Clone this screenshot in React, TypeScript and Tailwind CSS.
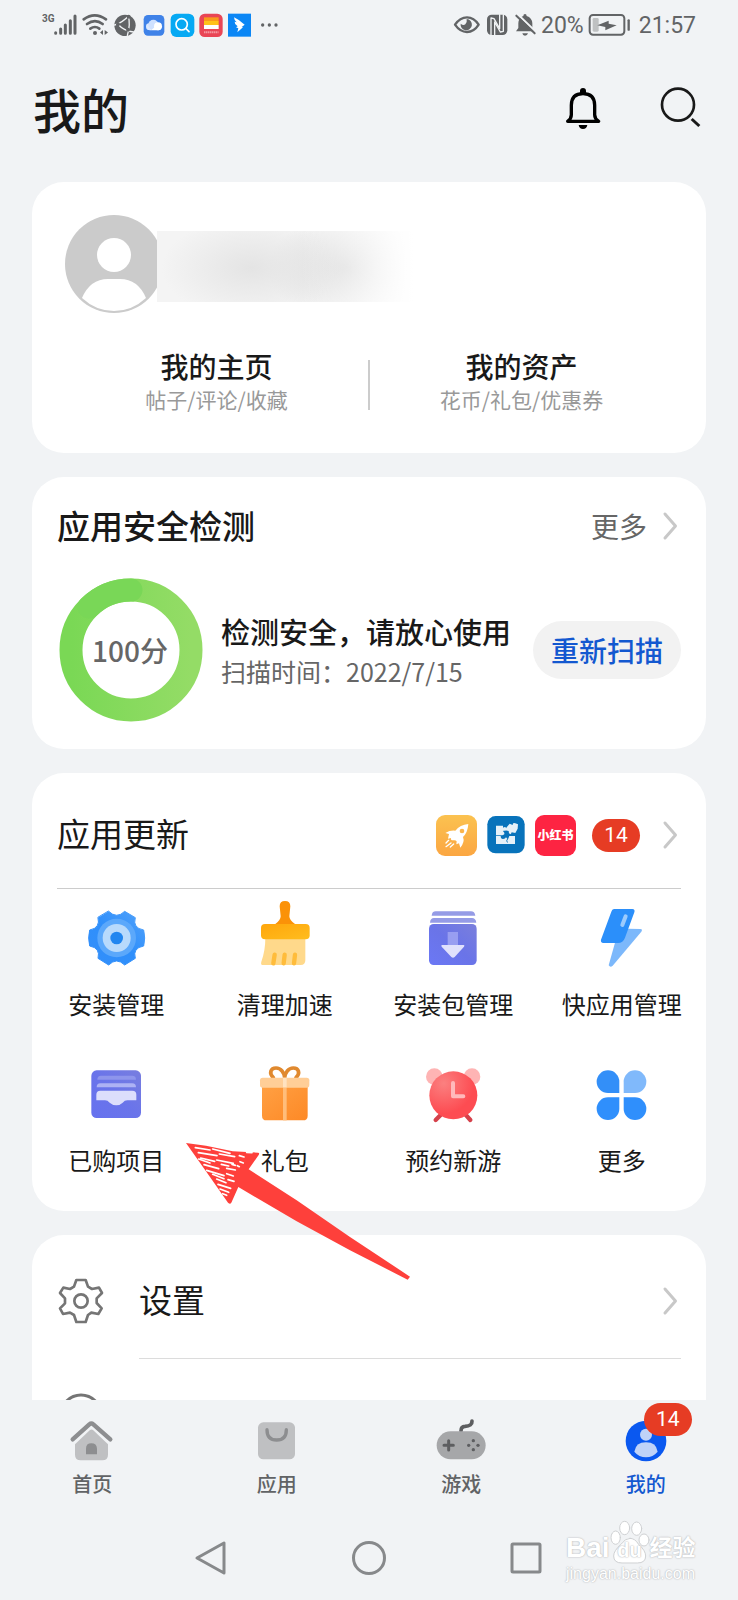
import type { ReactNode } from "react";

interface IconProps {
  viewBox: string;
  className: string;
  children: ReactNode;
}

function Icon({ viewBox, className, children }: IconProps) {
  return (
    <svg
      viewBox={viewBox}
      className={`shrink-0 overflow-visible ${className}`}
      fill="none"
      strokeLinecap="round"
      strokeLinejoin="round"
      aria-hidden="true"
    >
      {children}
    </svg>
  );
}

function Chevron() {
  return (
    <Icon viewBox="0 0 14 28" className="mr-1 h-7 w-3.5">
      <path d="M2 2 12.500 14 2 26" stroke="#c8c8c8" strokeWidth="3" />
    </Icon>
  );
}

function CountBadge({ count }: { count: number }) {
  return (
    <span className="flex h-[33px] w-12 items-center justify-center rounded-full bg-[#e63c24] font-[Roboto,sans-serif] text-[21px] leading-none text-white">
      {count}
    </span>
  );
}

function StatusBar() {
  return (
    <div className="flex h-[50px] shrink-0 items-center pr-[42px] pl-[42px] text-[#626466]">
      <div className="flex items-center gap-[5px]">
        <div className="flex w-[35px] items-start">
          <span className="w-3 font-[Roboto,sans-serif] text-[10px] leading-3 font-bold">3G</span>
          <Icon viewBox="160 39 72 72" className="h-6 w-6">
            <path
              d="M165 98v2M180 87v13M194 75v25M209 62v38M223 48v52"
              stroke="currentColor"
              strokeWidth="9"
            />
          </Icon>
        </div>
        {/* Wifi */}
        <Icon viewBox="247 39 78 72" className="h-6 w-[26px]">
          <g stroke="currentColor" strokeWidth="8">
            <path d="M252 58q33-24 67 0M262 72q24-17 47 0M272 86q14-10 27 0" />
          </g>
          <circle cx="286" cy="99" r="6" fill="currentColor" />
          <path d="M310 90v15l-9-7.500zM315 90v15l10-7.500z" fill="currentColor" />
        </Icon>
        {/* Browser globe */}
        <Icon viewBox="338 39 72 72" className="h-6 w-6">
          <circle cx="374" cy="76" r="32" fill="currentColor" />
          <path
            d="M343 75q22-6 45-30M352 72q20 22 48 24M384 49q7 22-3 58"
            stroke="#f1f3f5"
            strokeWidth="4"
          />
          <circle cx="353" cy="73" r="6" fill="currentColor" />
          <circle cx="385" cy="50" r="6" fill="currentColor" />
          <circle cx="383" cy="89" r="6" fill="currentColor" />
        </Icon>
        {/* Cloud */}
        <Icon viewBox="424 39 72 72" className="h-6 w-6">
          <rect x="429" y="45" width="62" height="62" rx="13" fill="#3f82e8" />
          <circle cx="446" cy="80" r="10" fill="#dbe9ff" />
          <circle cx="458" cy="74" r="15" fill="#cfe1ff" />
          <circle cx="472" cy="79" r="12" fill="#fff" />
          <path d="M445 91h28q9-2 10-11-10-10-19 0-6 7-19 11z" fill="#fff" />
        </Icon>
        {/* Search app */}
        <Icon viewBox="511 39 72 72" className="h-6 w-6">
          <rect x="510" y="41" width="71" height="70" rx="17" fill="#07a9f3" />
          <circle cx="543" cy="73" r="17" stroke="#fff" strokeWidth="5" />
          <path d="m556 86 9 9" stroke="#fff" strokeWidth="5" />
        </Icon>
        {/* Striped card */}
        <Icon viewBox="599 39 72 72" className="h-6 w-6">
          <rect x="597" y="41" width="70" height="70" rx="16" fill="#e94555" />
          <path d="M611 52h44v12h-44z" fill="#f99a1c" />
          <path d="M611 63h44v12h-44z" fill="#ffc21a" />
          <path d="M611 75h44v12h-44z" fill="#fff" />
          <path d="M612 97h43" stroke="#fbc1c6" strokeWidth="6" strokeDasharray="3 3" strokeLinecap="butt" />
        </Icon>
        {/* Wing */}
        <Icon viewBox="687 39 72 72" className="h-6 w-6">
          <path d="M684 41h69v69h-69z" fill="#0b86f5" />
          <path d="M702 52q17 8 32 22l-9 7 4 1-17 15 3-12-7-3 5-3q-10-7-9-14l6 2q-8-7-8-15z" fill="#fff" />
        </Icon>
        <Icon viewBox="774 39 72 72" className="h-6 w-6">
          <g fill="currentColor">
            <circle cx="788" cy="75" r="5" />
            <circle cx="808" cy="75" r="5" />
            <circle cx="828" cy="75" r="5" />
          </g>
        </Icon>
      </div>

      <div className="ml-auto flex items-center gap-1 font-[Roboto,sans-serif] text-[23px] leading-none">
        <Icon viewBox="253 39 84 72" className="h-6 w-7">
          <path d="M259 74q15-22 36-22t35 22q-14 22-35 22t-36-22z" stroke="currentColor" strokeWidth="7" />
          <path d="M294 57a17 17 0 1 1-18 14q8 7 14 2t4-16z" fill="currentColor" />
        </Icon>
        {/* NFC */}
        <Icon viewBox="352 39 72 72" className="h-6 w-6">
          <rect x="358" y="44" width="61" height="61" rx="14" fill="currentColor" />
          <path d="M370 105V54l9 2 17 30V44" stroke="#f1f3f5" strokeWidth="4" />
          <path d="M381 105V66l17 30 9-2V44" stroke="#f1f3f5" strokeWidth="4" />
        </Icon>
        {/* Muted bell */}
        <Icon viewBox="435 39 72 72" className="h-6 w-6">
          <path d="M471 42q5 0 5 6 16 5 17 22v14l7 10h-56l7-10V70q1-17 15-22 0-6 5-6z" fill="currentColor" />
          <path d="M463 100h17q-2 7-9 7t-8-7z" fill="currentColor" />
          <path d="m449 43 56 54" stroke="#f1f3f5" strokeWidth="6" />
          <path d="m445 47 55 53" stroke="currentColor" strokeWidth="6" />
        </Icon>
        <span>20%</span>
        <Icon viewBox="661 39 129 72" className="h-6 w-[43px]">
          <rect x="666" y="45" width="104" height="59" rx="10" stroke="currentColor" strokeWidth="6" />
          <rect x="675" y="54" width="18" height="41" rx="4" fill="#bfc1c2" />
          <path d="m689 76 34-14v9l24 5-34 15V81z" fill="currentColor" />
          <path d="M783 61v28" stroke="currentColor" strokeWidth="7" />
        </Icon>
        <span className="ml-1">21:57</span>
      </div>
    </div>
  );
}

function PageHeader() {
  return (
    <header className="flex h-[120px] shrink-0 items-center pr-[34px] pl-[33px]">
      <h1 className="pb-1 text-5xl font-medium text-[#191919]">我的</h1>
      <button type="button" aria-label="消息" className="ml-auto">
        <Icon viewBox="573 258 144 144" className="size-12">
          <path
            d="M599 364q11-8 11-20v-28q0-35 35-35t35 35v28q0 12 12 20z"
            stroke="#000"
            strokeWidth="10"
          />
          <path d="M636 279v-6q0-9 9-9t9 9v6zM632 375h26q-2 12-13 12t-13-12z" fill="#000" />
        </Icon>
      </button>
      <button type="button" aria-label="搜索" className="ml-[49px]">
        <Icon viewBox="864 258 144 144" className="size-12">
          <circle cx="930" cy="314" r="48" stroke="#191919" strokeWidth="8" />
          <path d="m971 357 23 21" stroke="#191919" strokeWidth="9" strokeLinecap="butt" />
        </Icon>
      </button>
    </header>
  );
}

const profileLinks = [
  { title: "我的主页", detail: "帖子/评论/收藏" },
  { title: "我的资产", detail: "花币/礼包/优惠券" },
];

function ProfileCard() {
  return (
    <section className="rounded-[32px] bg-white px-8 pt-[33px] pb-[38px]">
      <div className="flex items-center">
        <Icon viewBox="0 0 98 98" className="size-[98px]">
          <circle cx="50" cy="49" r="49" fill="#cbcbcb" />
          <circle cx="50" cy="40" r="17" fill="#fff" />
          <path d="M18 83Q26 64 44 64h12q18 0 26 19-14 13-32 13T18 83z" fill="#fff" />
        </Icon>
        {/* Hidden account name */}
        <div className="mt-1 -ml-[5px] h-[71px] w-[262px] bg-[linear-gradient(90deg,transparent_55%,#ffffff_98%),radial-gradient(ellipse_90px_50px_at_36%_52%,#e4e4e4,transparent),radial-gradient(ellipse_80px_50px_at_72%_52%,#dadada,transparent),linear-gradient(#f4f4f4,#f4f4f4)]" />
      </div>
      <div className="mt-9 flex items-center">
        {profileLinks.map((link, index) => (
          <a
            key={link.title}
            href="#"
            className="relative flex-1 text-center"
          >
            {index > 0 && <span className="absolute top-[11px] -left-px h-[50px] w-0.5 bg-[#cccccc]" />}
            <span className="block text-[28px] leading-[34px] font-medium text-[#191919]">{link.title}</span>
            <span className="block text-[21px] leading-8 text-[#999999]">{link.detail}</span>
          </a>
        ))}
      </div>
    </section>
  );
}

function SecurityCard() {
  return (
    <section className="rounded-[32px] bg-white px-[25px] pt-[27px] pb-7">
      <div className="flex h-11 items-center">
        <h2 className="text-[33px] font-medium text-[#191919]">应用安全检测</h2>
        <a href="#" className="ml-auto flex items-center gap-4 text-[28px] text-[#666666]">
          更多
          <Chevron />
        </a>
      </div>
      <div className="mt-[31px] flex items-center">
        <div className="relative ml-0.5">
          <Icon viewBox="0 0 142 142" className="size-[142px]">
            <defs>
              <linearGradient id="ring" x1="0" y1="0" x2="1" y2="0">
                <stop offset="0" stopColor="#7ad855" />
                <stop offset="1" stopColor="#94dc66" />
              </linearGradient>
            </defs>
            <circle cx="72" cy="71" r="60" stroke="url(#ring)" strokeWidth="23" />
            <path d="M30 28A60 60 0 0 1 72 11" stroke="#79d757" strokeWidth="23" />
          </Icon>
          <span className="absolute inset-0 flex items-center justify-center text-[28px] font-medium text-[#666666]">
            100分
          </span>
        </div>
        <div className="mt-0.5 ml-5">
          <p className="text-[29px] leading-10 font-medium text-[#191919]">检测安全，请放心使用</p>
          <p className="text-[25px] leading-10 text-[#666666]">扫描时间：2022/7/15</p>
        </div>
        <button
          type="button"
          className="ml-auto h-[58px] w-[148px] shrink-0 rounded-full bg-[#f2f2f2] text-[28px] font-medium text-[#1358d0]"
        >
          重新扫描
        </button>
      </div>
    </section>
  );
}

const tools = [
  {
    label: "安装管理",
    viewBox: "152 396 216 216",
    icon: (
      <>
        <defs>
          <linearGradient id="gear" x1="1" y1="0" x2="0" y2="1">
            <stop offset="0" stopColor="#52a2fa" />
            <stop offset=".5" stopColor="#2f8ffb" />
            <stop offset="1" stopColor="#338ffa" />
          </linearGradient>
        </defs>
        <path
          d="M238 424Q262 448 286 424L318 443Q309 474 343 480Q349 504 343 528Q309 534 318 565L286 585Q262 561 238 585L206 565Q214 534 181 528Q175 504 181 480Q214 474 206 443Z"
          fill="url(#gear)"
          stroke="url(#gear)"
          strokeWidth="3"
        />
        <circle cx="262" cy="504" r="58" fill="#5ba8fb" />
        <circle cx="262" cy="504" r="42" fill="#b8dafc" />
        <circle cx="262" cy="504" r="19" fill="#2186f0" />
      </>
    ),
  },
  {
    label: "清理加速",
    viewBox: "657 396 216 216",
    icon: (
      <>
        <defs>
          <linearGradient id="brush" x1="0" y1="0" x2="1" y2="1">
            <stop offset="0" stopColor="#ffa60c" />
            <stop offset="1" stopColor="#ffbd1e" />
          </linearGradient>
        </defs>
        <path d="M765 393q16 0 16 16l-3 30q0 12 18 24h-61q17-12 17-24l-3-30q0-16 16-16z" fill="#fb9208" />
        <path d="M706 505h120v66q0 14-14 14H699q-8 0-5-10 12-32 12-70z" fill="#ffd98b" />
        <path d="m734 554-4 26M764 554l-3 26M795 554l-3 26" stroke="#ffbc3b" strokeWidth="13" />
        <rect x="693" y="462" width="146" height="46" rx="12" fill="url(#brush)" />
      </>
    ),
  },
  {
    label: "安装包管理",
    viewBox: "115 396 216 216",
    icon: (
      <>
        <defs>
          <linearGradient id="box" x1="1" y1="0" x2="0" y2="1">
            <stop offset="0" stopColor="#7a7fdc" />
            <stop offset=".5" stopColor="#6a74e8" />
            <stop offset="1" stopColor="#6b78f5" />
          </linearGradient>
        </defs>
        <path d="M159 437q1-13 12-13h106q11 0 13 13z" fill="#959be6" />
        <path d="M154 458q1-14 12-14h114q11 0 13 14z" fill="#959be6" />
        <rect x="151" y="462" width="143" height="123" rx="14" fill="url(#box)" />
        <path d="M207 486h31v40h-31z" fill="#989ef1" />
        <path d="M190 525h65q4 1 1 5l-28 31q-5 5-10 0l-29-31q-3-4 1-5z" fill="#e0e1fc" />
      </>
    ),
  },
  {
    label: "快应用管理",
    viewBox: "619 396 216 216",
    icon: (
      <>
        <path d="m744 476 38 1q8 1 3 8l-86 102q-7 7-12-1l19-68z" fill="#7cb8fb" />
        <path d="M703 417h55q9 1 6 10l-28 76q-6 16-21 16h-44q-9-1-7-10l31-84q2-7 8-8z" fill="#2b8ffa" />
        <path d="m738 439-10 26" stroke="#9ccbfd" strokeWidth="12" />
      </>
    ),
  },
  {
    label: "已购项目",
    viewBox: "150 83 216 216",
    icon: (
      <>
        <defs>
          <linearGradient id="bought" x1="1" y1="0" x2="0" y2="1">
            <stop offset="0" stopColor="#787edf" />
            <stop offset=".5" stopColor="#6a74ea" />
            <stop offset="1" stopColor="#6672ef" />
          </linearGradient>
        </defs>
        <rect x="184" y="120" width="149" height="143" rx="16" fill="url(#bought)" />
        <path d="M202 148q0-12 11-12h94q11 0 11 12z" fill="#8e95ec" />
        <path d="M200 171q0-12 11-12h96q11 0 11 12z" fill="#adb2f4" />
        <path d="M199 210v-17q0-12 12-12h96q12 0 12 12v17h-27q-8 0-14 7-8 8-19 8t-20-8q-6-7-14-7z" fill="#dcdefc" />
      </>
    ),
  },
  {
    label: "礼包",
    viewBox: "657 83 216 216",
    icon: (
      <>
        <defs>
          <linearGradient id="gift" x1="0" y1="0" x2="1" y2="1">
            <stop offset="0" stopColor="#ffa043" />
            <stop offset="1" stopColor="#fd8926" />
          </linearGradient>
        </defs>
        <path
          d="M730 142c-14-14-8-29 8-29 15 0 25 14 26 29 1-15 11-29 26-29 16 0 22 15 8 29"
          stroke="#e0892f"
          strokeWidth="11"
        />
        <path d="M696 168h137v88q0 14-14 14H710q-14 0-14-14z" fill="url(#gift)" />
        <rect x="690" y="142" width="148" height="30" rx="8" fill="#ffce97" />
        <path d="M759 142h11v30h-11z" fill="#ffe2c0" />
        <path d="M759 172h11v98h-11z" fill="#ffbd7a" />
      </>
    ),
  },
  {
    label: "预约新游",
    viewBox: "113 83 216 216",
    icon: (
      <>
        <defs>
          <radialGradient id="clock" cx=".3" cy=".25" r=".9">
            <stop offset="0" stopColor="#fb8080" />
            <stop offset=".7" stopColor="#fd4c52" />
          </radialGradient>
        </defs>
        <path d="m186 252-17 17M258 252l15 17" stroke="#d5414b" strokeWidth="13" />
        <circle cx="165" cy="139" r="25" fill="#feb4b4" />
        <circle cx="278" cy="139" r="25" fill="#feb4b4" />
        <circle cx="222" cy="195" r="72" fill="url(#clock)" />
        <path d="M221 158v40h31" stroke="#ffb9bb" strokeWidth="12" />
      </>
    ),
  },
  {
    label: "更多",
    viewBox: "619 83 216 216",
    icon: (
      <>
        <path d="M685 120a34 34 0 0 1 34 34v34h-34a34 34 0 0 1 0-68z" fill="#338ff8" />
        <path d="M766 120a34 34 0 0 0-34 34v34h34a34 34 0 0 0 0-68z" fill="#80b9fb" />
        <path d="M685 269a34 34 0 0 0 34-34v-34h-34a34 34 0 0 0 0 68z" fill="#2f8ffc" />
        <path d="M766 269a34 34 0 0 1-34-34v-34h34a34 34 0 0 1 0 68z" fill="#2f8ffc" />
      </>
    ),
  },
];

// Hand-drawn pointer towards the purchased items entry
function PointerArrow() {
  return (
    <Icon
      viewBox="468 338 672 411"
      className="pointer-events-none absolute top-[370px] left-[154px] h-[137px] w-56"
    >
      <path
        d="M468 338 528 346 608 363 684 367Q690 368 686 374L656 417 800 510 960 620 1140 739 1133 748 960 660 800 573 625 470 605 515Q602 524 594 517L540 440Z"
        fill="#fe403b"
      />
      <path
        d="m496 352 44 7M548 356l52 13M505 367l56 9M568 371l46 8M512 383l42 10M560 389l50 10M506 386l34 12M522 403l44 12M574 402l22 5M530 420l52 16M590 414l26 5M548 432l34 13M590 430l20 7M560 446l28 11M594 448l18 5M564 462l38 12M570 476l26 10M578 490l12 5M606 402l10 3M628 376l14 4M630 394l10 4M650 366l16 1M622 406l6 3"
        stroke="#fff"
        strokeWidth="5"
      />
    </Icon>
  );
}

function UpdateCard() {
  return (
    <section className="relative z-10 rounded-[32px] bg-white pt-[11px] pb-[31px]">
      <a href="#" className="mx-[25px] flex h-[105px] items-center border-b border-[#cccccc] pb-0.5">
        <h2 className="pb-0.5 text-[33px] text-[#191919]">应用更新</h2>
        <span className="ml-auto flex items-center gap-2.5">
          <Icon viewBox="168 132 123 123" className="size-[41px]">
            <defs>
              <linearGradient id="rocket" x1="0" y1="0" x2="0" y2="1">
                <stop offset="0" stopColor="#fbc250" />
                <stop offset="1" stopColor="#fba642" />
              </linearGradient>
            </defs>
            <rect x="168" y="132" width="123" height="123" rx="27" fill="url(#rocket)" />
            <path
              d="M265 159q-25 2-39 20-15-2-30 7l11 3-3 14 9-2q-2 8 8 7 6-1 9 3l-1 9 8-3 4 13q14-17 8-32 14-13 16-39z"
              fill="#fff"
            />
            <circle cx="246" cy="180" r="7" fill="#fbb54a" />
            <path d="m206 208-8 8M213 216l-15 11M221 219l-10 9" stroke="#fff" strokeWidth="4" />
          </Icon>
          <Icon viewBox="321 139 114 114" className="size-[38px]">
            <rect x="322" y="139" width="112" height="112" rx="25" fill="#0873bb" />
            <path
              d="M348 168h21v6q9-5 10 3t-9 6q-2 2 2 5 4 7-5 9h-19zM348 199h14q0 9 7 9t9-5l4 4q-7 8 2 12v4h-36z"
              fill="#e6f1f8"
            />
            <path d="M384 223v-6q-5-4 0-8l4-10h17v24z" fill="#e6f1f8" />
            <path d="m380 173 9-11 9 4q0-9 8-5l8 3-1 13-7 13-11-2q-2 9-8 3l-1-7-11-2z" fill="#e6f1f8" />
          </Icon>
          <span className="flex size-[41px] items-center justify-center rounded-[9px] bg-[#fd2442] text-xs leading-none font-black whitespace-nowrap text-white">
            小红书
          </span>
        </span>
        <span className="mr-[23px] ml-4">
          <CountBadge count={14} />
        </span>
        <Chevron />
      </a>
      <div className="mt-[13px] grid grid-cols-4 gap-y-[34px]">
        {tools.map((tool) => (
          <a key={tool.label} href="#" className="flex flex-col items-center gap-3">
            <Icon viewBox={tool.viewBox} className="size-[72px]">
              {tool.icon}
            </Icon>
            <span className="pb-0.5 text-2xl leading-9 whitespace-nowrap text-[#191919]">{tool.label}</span>
          </a>
        ))}
      </div>
      <PointerArrow />
    </section>
  );
}

function SettingsCard() {
  return (
    <section className="rounded-[32px] bg-white px-[25px] pt-2.5">
      <a href="#" className="flex h-[113px] items-center pb-0.5">
        <Icon viewBox="172 21 144 144" className="size-12">
          <path
            d="M230 30h28l7 20 12 7 21-4 9 16-16 16v14l15 16-10 17-21-4-10 7-7 21h-28l-7-21-12-7-21 4-9-17 15-15v-15l-15-16 10-16 20 4 12-7z"
            stroke="#757575"
            strokeWidth="8"
          />
          <circle cx="244" cy="93" r="20" stroke="#757575" strokeWidth="8" />
        </Icon>
        <span className="ml-[34px] pb-0.5 text-[33px] text-[#191919]">设置</span>
        <span className="ml-auto">
          <Chevron />
        </span>
      </a>
      <div className="ml-[82px] h-px bg-[#dcdcdc]" />
      <a href="#" aria-label="帮助" className="flex h-[113px] items-center">
        <Icon viewBox="0 0 48 48" className="size-12">
          <circle cx="24" cy="23" r="20" stroke="#757575" strokeWidth="3" />
        </Icon>
      </a>
    </section>
  );
}

const tabs = [
  {
    label: "首页",
    viewBox: "204 440 144 144",
    active: false,
    icon: (
      <>
        <path d="m225 522 45-43q5-3 9 0l45 43v31q0 17-17 17h-65q-17 0-17-17z" fill="#bfc0c2" />
        <path d="m218 507 50-45q6-5 12 0l51 45" stroke="#f1f3f5" strokeWidth="21" />
        <path d="m218 507 50-45q6-5 12 0l51 45" stroke="#8d8e90" strokeWidth="13" />
        <path d="M258 552v-17q0-16 16-16t17 16v17z" fill="#8d8e90" />
      </>
    ),
  },
  {
    label: "应用",
    viewBox: "759 440 144 144",
    active: false,
    icon: (
      <>
        <rect x="774" y="456" width="111" height="111" rx="16" fill="#bfc0c2" />
        <path d="M801 478q0 31 29 31t29-31" stroke="#8d8e90" strokeWidth="10" />
      </>
    ),
  },
  {
    label: "游戏",
    viewBox: "208 440 144 144",
    active: false,
    icon: (
      <>
        <path d="M280 482q0-14 12-14 22-1 21-16" stroke="#5d5e60" strokeWidth="11" />
        <rect x="207" y="483" width="147" height="84" rx="42" fill="#a6a7a9" />
        <path d="M229 525h28M243 511v28" stroke="#5d5e60" strokeWidth="9" />
        <g fill="#5d5e60">
          <circle cx="317" cy="511" r="5" />
          <circle cx="317" cy="538" r="5" />
          <circle cx="303" cy="525" r="5" />
          <circle cx="331" cy="525" r="5" />
        </g>
      </>
    ),
  },
  {
    label: "我的",
    viewBox: "763 440 144 144",
    active: true,
    icon: (
      <>
        <circle cx="835" cy="512" r="61" fill="#0a58f0" />
        <circle cx="835" cy="493" r="18" fill="#bfd2f8" />
        <path d="M800 544q4-28 35-28t35 28q-14 17-35 17t-35-17z" fill="#bfd2f8" />
      </>
    ),
  },
];

function TabBar() {
  return (
    <nav className="grid h-[116px] shrink-0 grid-cols-4 pt-[17px]">
      {tabs.map((tab) => (
        <a key={tab.label} href="#" className="flex flex-col items-center gap-[5px]">
          <span className="relative">
            <Icon viewBox={tab.viewBox} className="size-12">
              {tab.icon}
            </Icon>
            {tab.active && (
              <span className="absolute -top-3.5 left-[22px]">
                <CountBadge count={14} />
              </span>
            )}
          </span>
          <span
            className={
              tab.active
                ? "text-xl leading-7 font-medium text-[#1358d0]"
                : "text-xl leading-7 font-medium text-[#616365]"
            }
          >
            {tab.label}
          </span>
        </a>
      ))}
    </nav>
  );
}

function SystemNav() {
  return (
    <div className="flex h-[84px] shrink-0 items-center justify-center gap-31">
      <button type="button" aria-label="返回">
        <Icon viewBox="0 0 34 34" className="size-[34px]">
          <path d="M30 2v30L3 17z" stroke="#87898b" strokeWidth="3" />
        </Icon>
      </button>
      <button type="button" aria-label="主屏幕">
        <Icon viewBox="0 0 34 34" className="size-[34px]">
          <circle cx="17" cy="17" r="15.500" stroke="#87898b" strokeWidth="3" />
        </Icon>
      </button>
      <button type="button" aria-label="最近任务">
        <Icon viewBox="0 0 34 34" className="size-[34px]">
          <rect x="2" y="3" width="28" height="28" rx="1" stroke="#87898b" strokeWidth="3" />
        </Icon>
      </button>
    </div>
  );
}

function Watermark() {
  return (
    <div className="pointer-events-none absolute right-10 bottom-4 w-[132px] text-white [text-shadow:0_0_2px_#b9bbbd,0_0_1px_#b9bbbd]">
      <div className="flex items-end font-['Liberation_Sans','Noto_Sans_CJK_SC',sans-serif] font-bold">
        <span className="text-[28px] leading-8">Bai</span>
        <span className="relative flex h-11 w-10 items-end justify-center">
          <Icon viewBox="728 748 120 132" className="absolute inset-0 h-11 w-10">
            <g fill="#fff" stroke="#cfd1d3" strokeWidth="3">
              <ellipse cx="745" cy="801" rx="14" ry="20" />
              <ellipse cx="772" cy="772" rx="15" ry="20" />
              <ellipse cx="808" cy="774" rx="15" ry="20" />
              <ellipse cx="830" cy="808" rx="15" ry="18" />
              <path d="M788 803q15 0 25 17 22 20 22 36 0 21-25 21h-46q-25 0-25-21 0-16 23-36 11-17 26-17z" />
            </g>
          </Icon>
          <span className="relative text-xl leading-7">du</span>
        </span>
        <span className="text-[23px] leading-8">经验</span>
      </div>
      <div className="font-['Liberation_Sans',sans-serif] text-base leading-5">jingyan.baidu.com</div>
    </div>
  );
}

export default function App() {
  return (
    <div className="relative flex h-screen flex-col overflow-hidden bg-[#f1f3f5] font-['Noto_Sans_CJK_SC',sans-serif]">
      <StatusBar />
      <PageHeader />
      <main className="flex min-h-0 flex-1 flex-col gap-6 overflow-y-auto px-8 pt-3 [scrollbar-width:none] *:shrink-0">
        <ProfileCard />
        <SecurityCard />
        <UpdateCard />
        <SettingsCard />
      </main>
      <TabBar />
      <SystemNav />
      <Watermark />
    </div>
  );
}
